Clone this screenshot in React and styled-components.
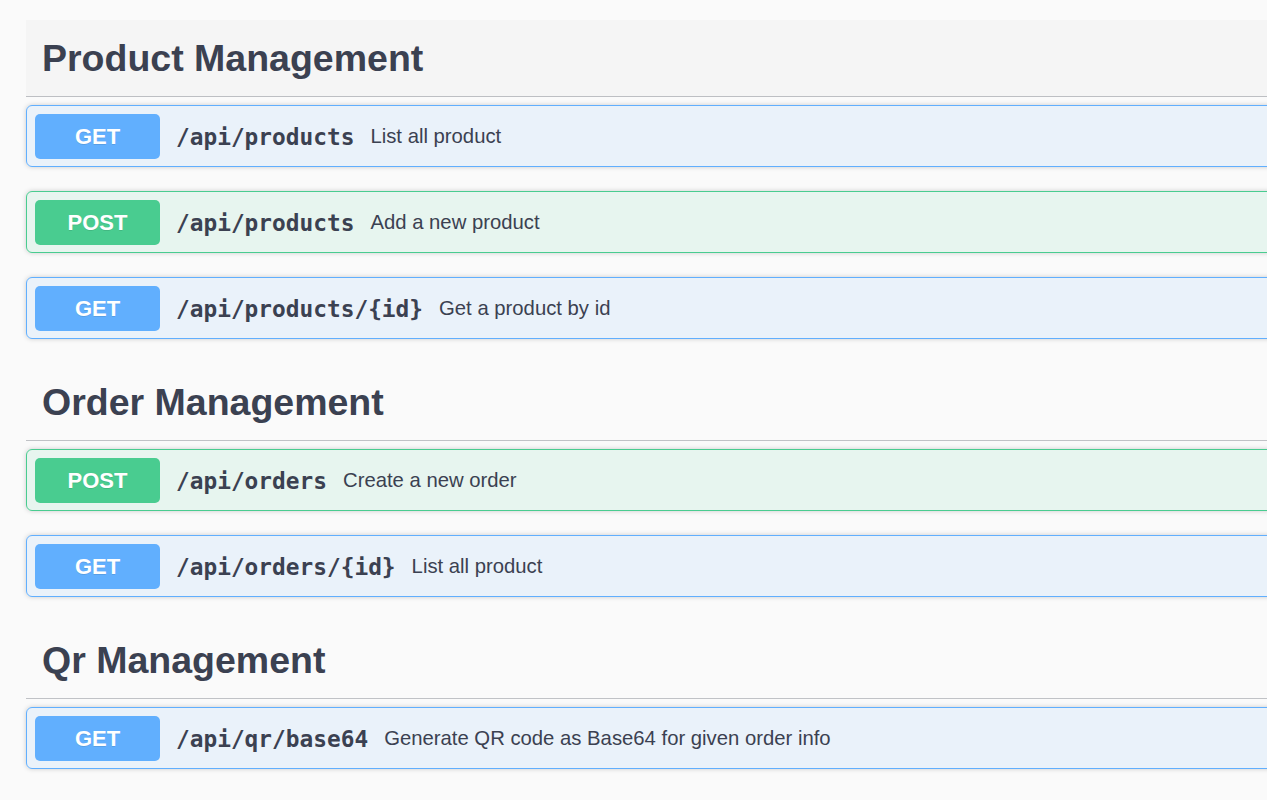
import styled, { createGlobalStyle } from "styled-components";

const GlobalStyle = createGlobalStyle`
  html, body {
    margin: 0;
    padding: 0;
    background: #fafafa;
  }
  body {
    font-family: "Liberation Sans", Arial, sans-serif;
    color: #3b4151;
  }
`;

const sections = [
  {
    name: "Product Management",
    active: true,
    ops: [
      { method: "GET", path: "/api/products", summary: "List all product" },
      { method: "POST", path: "/api/products", summary: "Add a new product" },
      { method: "GET", path: "/api/products/{id}", summary: "Get a product by id" },
    ],
  },
  {
    name: "Order Management",
    ops: [
      { method: "POST", path: "/api/orders", summary: "Create a new order" },
      { method: "GET", path: "/api/orders/{id}", summary: "List all product" },
    ],
  },
  {
    name: "Qr Management",
    ops: [
      {
        method: "GET",
        path: "/api/qr/base64",
        summary: "Generate QR code as Base64 for given order info",
      },
    ],
  },
];

const colors = {
  GET: { main: "#61affe", bg: "rgba(97, 175, 254, 0.1)" },
  POST: { main: "#49cc90", bg: "rgba(73, 204, 144, 0.1)" },
};

const App = () => {
  return (
    <Page>
      <GlobalStyle />
      <Wrapper>
        {sections.map((section) => (
          <Section key={section.name}>
            <TagHeader $active={section.active}>{section.name}</TagHeader>
            {section.ops.map((op, i) => (
              <Opblock key={i} $method={op.method}>
                <Method $method={op.method}>{op.method}</Method>
                <Path>{op.path}</Path>
                <Summary>{op.summary}</Summary>
              </Opblock>
            ))}
          </Section>
        ))}
      </Wrapper>
    </Page>
  );
};

const Page = styled.div`
  width: 100%;
  overflow: hidden;
`;

const Wrapper = styled.div`
  padding: 20px 0 0 26px;
  width: 1400px;
`;

const Section = styled.section`
  display: flex;
  flex-direction: column;
  margin-bottom: 1px;
`;

const TagHeader = styled.h3`
  margin: 0 0 8px;
  padding: 16px 31px 16px 16px;
  font-size: 37.5px;
  line-height: 44px;
  font-weight: 700;
  color: #3b4151;
  border-bottom: 1px solid rgba(59, 65, 81, 0.3);
  background: ${(p) => (p.$active ? "rgba(0, 0, 0, 0.02)" : "transparent")};
`;

const Opblock = styled.div`
  display: flex;
  align-items: center;
  margin: 0 0 24px;
  padding: 8px 8px 7px;
  border: 1px solid ${(p) => colors[p.$method].main};
  border-radius: 6px;
  background: ${(p) => colors[p.$method].bg};
  box-shadow: 0 0 5px rgba(0, 0, 0, 0.19);
`;

const Method = styled.span`
  width: 125px;
  height: 45px;
  display: flex;
  align-items: center;
  justify-content: center;
  border-radius: 5px;
  background: ${(p) => colors[p.$method].main};
  color: #fff;
  font-size: 22px;
  font-weight: 700;
  text-shadow: 0 1px 0 rgba(0, 0, 0, 0.1);
`;

const Path = styled.span`
  padding: 0 16px;
  font-family: "DejaVu Sans Mono", "Liberation Mono", monospace;
  font-size: 22.8px;
  font-weight: 700;
  color: #3b4151;
`;

const Summary = styled.span`
  font-size: 20.3px;
  color: #3b4151;
`;

export default App;
